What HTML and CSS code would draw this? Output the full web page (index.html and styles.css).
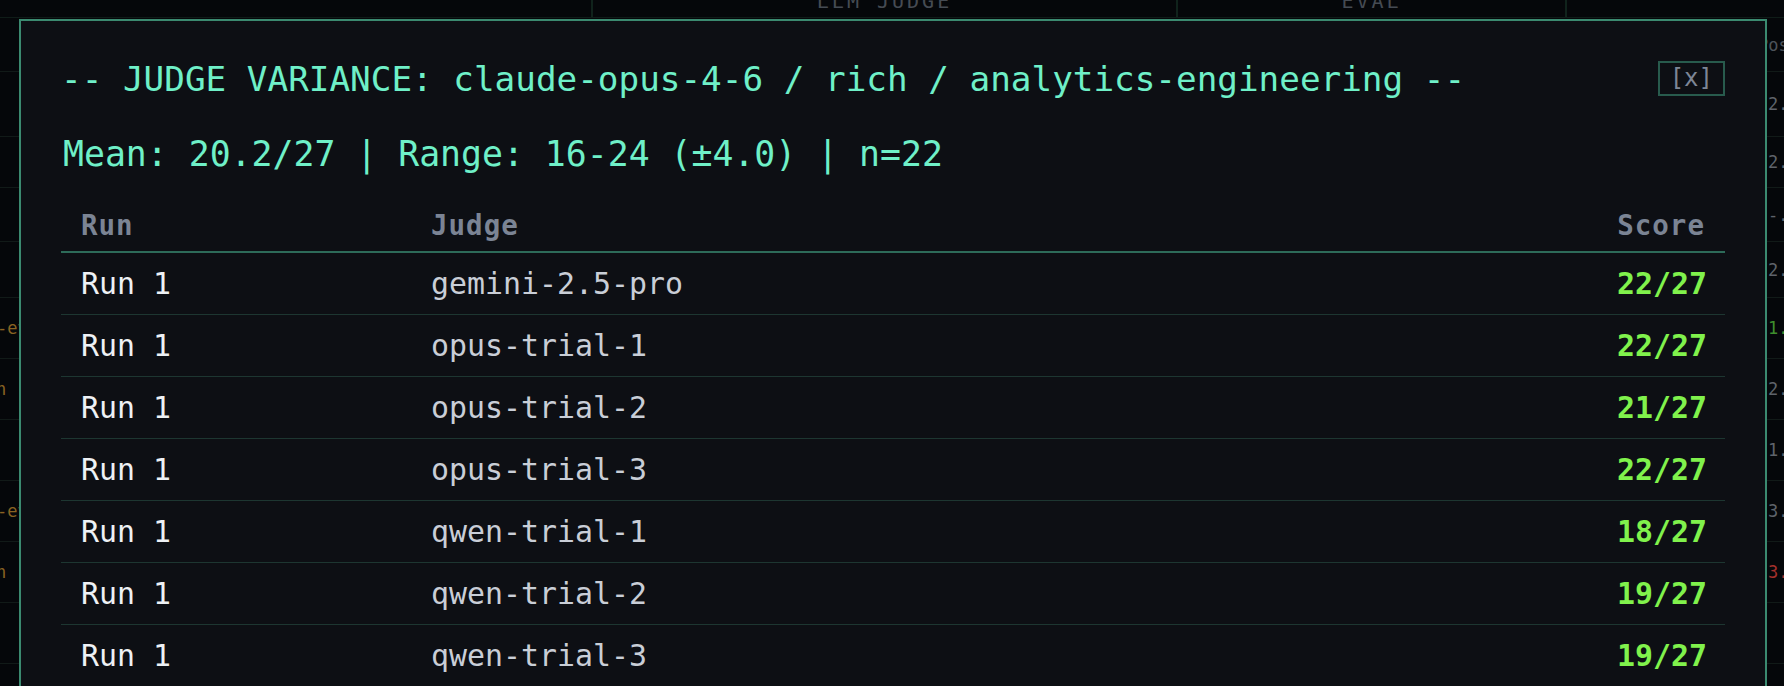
FILE: index.html
```html
<!DOCTYPE html>
<html>
<head>
<meta charset="utf-8">
<link rel="stylesheet" href="styles.css">
</head>
<body>
<div class="bg">
  <div class="bg-group">
    <div class="gcell"></div>
    <div class="gcell"><span class="glabel">LLM JUDGE</span></div>
    <div class="gcell"><span class="glabel">EVAL</span></div>
    <div class="gcell"></div>
  </div>
  <div class="bg-row bg-headrow"><div class="lc"></div><div class="mc"></div><div class="rc hd">Pos</div></div>
  <div class="bg-row h64"><div class="lc"></div><div class="mc"></div><div class="rc">2.1</div></div>
  <div class="bg-row h50"><div class="lc"></div><div class="mc"></div><div class="rc">2.3</div></div>
  <div class="bg-row h53"><div class="lc"></div><div class="mc"></div><div class="rc">-.-</div></div>
  <div class="bg-row h55"><div class="lc"></div><div class="mc"></div><div class="rc">2.0</div></div>
  <div class="bg-row"><div class="lc ra">user-events</div><div class="mc"></div><div class="rc good">1.4</div></div>
  <div class="bg-row"><div class="lc rb">user-churn</div><div class="mc"></div><div class="rc">2.2</div></div>
  <div class="bg-row"><div class="lc"></div><div class="mc"></div><div class="rc">1.8</div></div>
  <div class="bg-row"><div class="lc ra">user-events</div><div class="mc"></div><div class="rc">3.1</div></div>
  <div class="bg-row"><div class="lc rb">user-churn</div><div class="mc"></div><div class="rc bad">3.6</div></div>
  <div class="bg-row"><div class="lc"></div><div class="mc"></div><div class="rc"></div></div>
</div>

<div class="modal">
  <div class="modal-head">
    <h2 class="title">-- JUDGE VARIANCE: claude-opus-4-6 / rich / analytics-engineering --</h2>
    <button class="close">[x]</button>
  </div>
  <div class="summary">Mean: 20.2/27 | Range: 16-24 (±4.0) | n=22</div>
  <table class="vt">
    <thead>
      <tr><th class="c-run">Run</th><th class="c-judge">Judge</th><th class="c-score">Score</th></tr>
    </thead>
    <tbody>
      <tr><td class="c-run">Run 1</td><td class="c-judge">gemini-2.5-pro</td><td class="c-score">22/27</td></tr>
      <tr><td class="c-run">Run 1</td><td class="c-judge">opus-trial-1</td><td class="c-score">22/27</td></tr>
      <tr><td class="c-run">Run 1</td><td class="c-judge">opus-trial-2</td><td class="c-score">21/27</td></tr>
      <tr><td class="c-run">Run 1</td><td class="c-judge">opus-trial-3</td><td class="c-score">22/27</td></tr>
      <tr><td class="c-run">Run 1</td><td class="c-judge">qwen-trial-1</td><td class="c-score">18/27</td></tr>
      <tr><td class="c-run">Run 1</td><td class="c-judge">qwen-trial-2</td><td class="c-score">19/27</td></tr>
      <tr><td class="c-run">Run 1</td><td class="c-judge">qwen-trial-3</td><td class="c-score">19/27</td></tr>
      <tr><td class="c-run">Run 2</td><td class="c-judge">gemini-2.5-pro</td><td class="c-score">24/27</td></tr>
      <tr><td class="c-run">Run 2</td><td class="c-judge">opus-trial-1</td><td class="c-score">20/27</td></tr>
    </tbody>
  </table>
</div>
</body>
</html>
```
FILE: styles.css
```css
html, body {
  margin: 0;
  padding: 0;
  background: #05070a;
  height: 686px;
  overflow: hidden;
}
body {
  font-family: "DejaVu Sans Mono", "Liberation Mono", monospace;
  position: relative;
}

/* background table (scrolled, mostly hidden behind modal) */
.bg {
  width: 1784px;
}
.bg-group {
  display: grid;
  grid-template-columns: 591px 585px 389px 1fr;
  grid-template-rows: 17px;
  height: 17px;
  border-bottom: 1px solid #0f1c18;
  overflow: hidden;
}
.gcell {
  display: flex;
  justify-content: center;
  align-items: flex-end;
  border-left: 2px solid #10231c;
  min-height: 0;
}
.gcell:first-child { border-left: none; }
.glabel {
  font-size: 20px;
  line-height: 20px;
  letter-spacing: 3px;
  color: #454b53;
  margin-bottom: 6px;
  white-space: nowrap;
}
.bg-row {
  display: grid;
  grid-template-columns: 300px 1467px 1fr;
  grid-template-rows: 60px;
  height: 60px;
  border-bottom: 1px solid #111a18;
  align-items: center;
  font-size: 17px;
  overflow: hidden;
}
.bg-row.bg-headrow { grid-template-rows: 53px; height: 53px; }
.bg-row.h64 { grid-template-rows: 64px; height: 64px; }
.bg-row.h50 { grid-template-rows: 50px; height: 50px; }
.bg-row.h53 { grid-template-rows: 53px; height: 53px; }
.bg-row.h55 { grid-template-rows: 55px; height: 55px; }
.lc {
  color: #8a6322;
  white-space: nowrap;
}
.lc.ra { margin-left: -44px; }
.lc.rb { margin-left: -96px; }
.rc {
  color: #5e636a;
  padding-left: 1px;
  white-space: nowrap;
}
.rc.hd { margin-left: -10px; color: #4c5259; }
.rc.good { color: #3f8f2e; }
.rc.bad { color: #a3302c; }

/* modal */
.modal {
  position: absolute;
  left: 19px;
  top: 19px;
  width: 1664px;
  padding: 40px;
  background: #0d0f14;
  border: 2px solid #3b8a70;
}
.modal-head {
  display: flex;
  justify-content: space-between;
  align-items: flex-start;
}
.title {
  margin: 0;
  font-size: 34.3px;
  line-height: 37.7px;
  font-weight: normal;
  color: #6ff0c8;
  white-space: nowrap;
}
.close {
  font-family: "DejaVu Sans Mono", "Liberation Mono", monospace;
  font-size: 24px;
  line-height: 25px;
  padding: 3px 10px;
  background: transparent;
  color: #7d8696;
  border: 2px solid #285b4d;
  border-radius: 0;
  margin: 0;
}
.summary {
  margin-top: 35px;
  padding-left: 2px;
  font-size: 34.8px;
  line-height: 40px;
  color: #6ff0c8;
  white-space: nowrap;
}
.vt {
  margin-top: 22px;
  width: 100%;
  border-collapse: collapse;
}
.vt th {
  font-size: 27.5px;
  line-height: 30px;
  font-weight: bold;
  letter-spacing: 1px;
  color: #7b8494;
  padding: 14px 18px 11px 20px;
  text-align: left;
  border-bottom: 2px solid #2d6b59;
}
.vt td {
  font-size: 29.9px;
  line-height: 36px;
  padding: 13px 18px 12px 20px;
  border-bottom: 1px solid #1d3631;
  white-space: nowrap;
}
.c-run { width: 312px; }
.vt td.c-run { color: #eef1f5; }
.vt td.c-judge { color: #c9ced7; }
.vt .c-score { text-align: right; }
.vt th.c-score { padding-right: 20px; }
.vt td.c-score { color: #80f24c; font-weight: bold; }
```
